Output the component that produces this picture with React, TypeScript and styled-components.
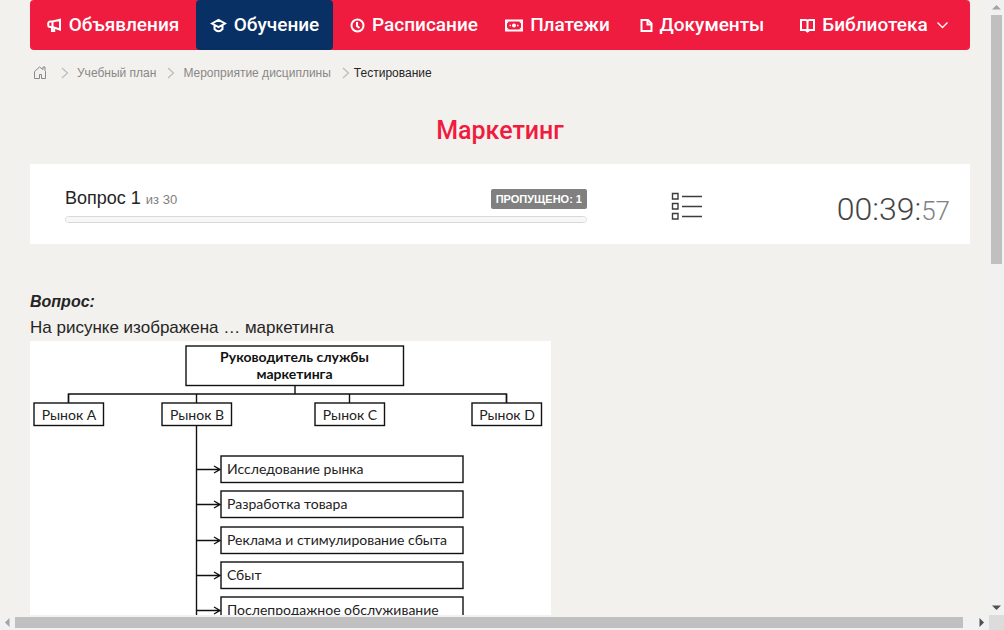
import React from "react";
import styled, { createGlobalStyle } from "styled-components";

const sans = `"Liberation Sans", Arial, sans-serif`;
const display = `Roboto, "Noto Sans", sans-serif`;

const GlobalStyle = createGlobalStyle`
  * { box-sizing: border-box; }
  body { margin: 0; background: #f3f1ed; color: #252525; font-family: ${sans}; }
`;

const Shell = styled.div`
  display: grid;
  grid-template: minmax(0, 1fr) 15px / minmax(0, 1fr) 15px;
  height: 100vh;
`;

const Viewport = styled.div`
  overflow: auto;
  scrollbar-width: none;
`;

const Page = styled.div`
  padding: 0 19px 40px 30px;
`;

const Nav = styled.nav`
  display: grid;
  grid-template-columns: 166fr 137fr 162fr 125fr 164fr 180fr;
  height: 50px;
  padding-right: 6px;
  border-radius: 4px;
  background: #ef1c3f;
`;

const NavLink = styled.a<{ $active?: boolean }>`
  display: flex;
  align-items: center;
  justify-content: center;
  gap: 7px;
  border-radius: 4px;
  background: ${(p) => (p.$active ? "#083064" : "transparent")};
  color: #fff;
  font: 500 19px/24px ${display};
  text-decoration: none;
  white-space: nowrap;
`;

const Icon = styled.svg`
  flex: none;
  fill: none;
  stroke: currentColor;
  stroke-width: 2;
`;

const Chevron = styled(Icon)`
  margin-left: 2px;
  stroke-width: 1.3;
`;

const HomeIcon = styled(Icon)`
  margin-right: 3px;
  stroke-width: 1;
`;

const Crumbs = styled.ol`
  display: flex;
  align-items: center;
  height: 46px;
  margin: 0;
  padding: 0 0 0 3px;
  list-style: none;
  font-size: 12px;
  line-height: 16px;
`;

const Crumb = styled.li`
  display: flex;
  align-items: center;
  color: #252525;

  a {
    display: flex;
    color: #888;
    text-decoration: none;
  }
`;

const Separator = styled(Icon)`
  margin: 0 8px 0 11px;
  color: #bcbcbc;
  stroke-width: 1.2;

  [aria-current] > & { margin-right: 4px; }
`;

const Title = styled.h1`
  margin: 18px 0 16px;
  color: #ef1c3f;
  font: 500 25px/34px ${display};
  text-align: center;
`;

const Card = styled.section`
  display: grid;
  grid-template-columns: 522fr 200fr 163fr;
  align-items: center;
  height: 80px;
  padding: 2px 20px 0 35px;
  background: #fff;
`;

const ProgressHead = styled.div`
  display: flex;
  align-items: center;
  justify-content: space-between;
  height: 22px;
  margin-bottom: 6px;
`;

const Counter = styled.label`
  font-size: 18px;
  line-height: 22px;

  small {
    color: #808080;
    font-size: 13px;
  }
`;

const Badge = styled.span`
  padding: 0 5px;
  border-radius: 2px;
  background: #808080;
  color: #fff;
  font-size: 11px;
  font-weight: bold;
  line-height: 20px;
`;

const Progress = styled.progress`
  display: block;
  appearance: none;
  width: 100%;
  height: 7px;
  border: 1px solid #d8d8d8;
  border-radius: 4px;
  background: #f7f7f7;
  overflow: hidden;

  &::-webkit-progress-bar { background: #f7f7f7; }
  &::-webkit-progress-value { background: #ef1c3f; }
`;

const ListButton = styled.button`
  justify-self: center;
  display: flex;
  padding: 4px 0 0;
  border: 0;
  background: none;
  color: #3c3c3c;
`;

const Timer = styled.time`
  justify-self: end;
  padding-top: 10px;
  color: #444;
  font: 300 32px/38px ${display};
  white-space: nowrap;

  small {
    color: #808080;
    font-size: 26px;
  }
`;

const Question = styled.section`
  margin-top: 45px;
`;

const QuestionLabel = styled.h2`
  margin: 0;
  font-size: 16px;
  font-style: italic;
  line-height: 26px;
`;

const QuestionText = styled.p`
  margin: 0;
  font-size: 17px;
  line-height: 26px;
`;

const Figure = styled.svg`
  display: block;
  background: #fff;
  fill: none;
  stroke: #111;
  stroke-width: 1.4;

  text {
    fill: #222;
    stroke: none;
    font: 14px Lato, "Open Sans", sans-serif;
  }

  .heading {
    fill: #111;
    font-weight: 700;
    text-anchor: middle;
  }

  .market {
    text-anchor: middle;
  }
`;

const Bar = styled.div<{ $vertical?: boolean }>`
  display: flex;
  flex-direction: ${(p) => (p.$vertical ? "column" : "row")};
  background: #f1f1f1;
`;

const Arrow = styled.button`
  display: flex;
  flex: none;
  align-items: center;
  justify-content: center;
  width: 15px;
  height: 15px;
  padding: 0;
  border: 0;
  background: none;
  color: #505050;

  &:disabled { color: #a3a3a3; }
`;

const Track = styled.div<{ $vertical?: boolean }>`
  display: flex;
  flex: 1;
  flex-direction: ${(p) => (p.$vertical ? "column" : "row")};
  padding: ${(p) => (p.$vertical ? "0 2px" : "2px 0")};
`;

const Thumb = styled.div<{ $share: number }>`
  flex: 0 0 ${(p) => p.$share}%;
  background: #c0c0c0;
`;

const Corner = styled.div`
  background: #dcdcdc;
`;

const items = [
  {
    label: "Объявления",
    width: 15,
    art: (
      <>
        <path d="M5.500 3.500 13 1.800v9.700L5.500 9H3.200A2 2 0 0 1 1.200 7V5.500a2 2 0 0 1 2-2zV9" />
        <path d="M5 9v4h2.200V9.500" />
      </>
    ),
  },
  {
    label: "Обучение",
    width: 17,
    active: true,
    art: <path d="M2 5.500 8.500 1.800 15 5.500 8.500 9.200zM4.500 7.500V11q4 4.500 8 0V7.500" />,
  },
  {
    label: "Расписание",
    width: 15,
    art: (
      <>
        <circle cx="7.5" cy="7.5" r="6" />
        <path d="M7 4v4l2.5 2" />
      </>
    ),
  },
  {
    label: "Платежи",
    width: 18,
    art: (
      <>
        <path d="M1 2.500h16v10H1z" />
        <path d="M2 3.500h2L2 5.500zM16 3.500h-2l2 2zM2 11.500h2l-2-2zM16 11.500h-2l2-2z" fill="#fff" stroke="none" />
        <circle cx="9" cy="7.500" r="2" fill="#fff" stroke="none" />
        <path d="M4.500 7.500H6M12 7.500h1.500" strokeWidth="1.500" />
      </>
    ),
  },
  {
    label: "Документы",
    width: 13,
    art: <path d="M1.500 2H8l3.500 3.500V13h-10zM7.500 2v4.500h4" />,
  },
  {
    label: "Библиотека",
    width: 15,
    menu: true,
    art: <path d="M1 2h4.500q2 0 2 1.500Q7.500 2 9.500 2H14v10H9.500l-2 1.500-2-1.500H1zM7.500 3v11" />,
  },
];

const markets = [
  { x: 4, stem: 38, name: "Рынок A" },
  { x: 132, stem: 166, name: "Рынок B" },
  { x: 285, stem: 319, name: "Рынок C" },
  { x: 442, stem: 476, name: "Рынок D" },
];

const tasks = [
  "Исследование рынка",
  "Разработка товара",
  "Реклама и стимулирование сбыта",
  "Сбыт",
  "Послепродажное обслуживание",
];

const CrumbSeparator = () => (
  <Separator width="8" height="12" viewBox="0 0 8 12" aria-hidden="true">
    <path d="m1 1 5.500 5L1 11" />
  </Separator>
);

const MarketingChart = () => (
  <Figure width="521" height="310" viewBox="0 0 521 310" role="img" aria-label="Структура службы маркетинга">
    <rect x="156" y="5" width="217.500" height="39.500" />
    <text className="heading" x="264.500" y="21">Руководитель службы</text>
    <text className="heading" x="264.500" y="38">маркетинга</text>
    <path d="M265 44.500V53M38.500 61.500V53h438v8.500" />
    {markets.map((m) => (
      <g key={m.name}>
        <path d={`M${m.stem}.500 53v9`} />
        <rect x={m.x} y="62" width="69.500" height="22.500" />
        <text className="market" x={m.x + 35} y="79">{m.name}</text>
      </g>
    ))}
    <path d="M166.500 84.500V275" />
    {tasks.map((name, i) => {
      const y = 115 + Math.round(i * 35.300);
      return (
        <g key={name}>
          <rect x="191" y={y} width="242" height="26.500" />
          <path d={`M166.500 ${y + 13.500}H190m-6-3.500 6 3.500-6 3.500`} />
          <text x="197" y={y + 18}>{name}</text>
        </g>
      );
    })}
  </Figure>
);

const Triangle = ({ points }: { points: string }) => (
  <svg width="9" height="9" viewBox="0 0 9 9" aria-hidden="true">
    <polygon points={points} fill="currentColor" />
  </svg>
);

export default function App() {
  return (
    <>
      <GlobalStyle />
      <Shell>
        <Viewport>
          <Page>
            <Nav>
              {items.map((item) => (
                <NavLink key={item.label} href="#" $active={item.active}>
                  <Icon width={item.width} height="15" viewBox={`0 0 ${item.width} 15`} aria-hidden="true">
                    {item.art}
                  </Icon>
                  {item.label}
                  {item.menu && (
                    <Chevron width="11" height="8" viewBox="0 0 11 8" aria-hidden="true">
                      <path d="m.5 1.500 5 5 5-5" />
                    </Chevron>
                  )}
                </NavLink>
              ))}
            </Nav>

            <Crumbs>
              <Crumb>
                <a href="#" aria-label="Главная">
                  <HomeIcon width="14" height="14" viewBox="0 0 14 14" aria-hidden="true">
                    <path d="M1.500 12.500v-7l5-4.500L10 3.500V1h2v4l.5.500v7h-4v-4h-2v4z" />
                  </HomeIcon>
                </a>
              </Crumb>
              <Crumb><CrumbSeparator /><a href="#">Учебный план</a></Crumb>
              <Crumb><CrumbSeparator /><a href="#">Мероприятие дисциплины</a></Crumb>
              <Crumb aria-current="page"><CrumbSeparator />Тестирование</Crumb>
            </Crumbs>

            <Title>Маркетинг</Title>

            <Card>
              <div>
                <ProgressHead>
                  <Counter htmlFor="progress">Вопрос 1 <small>из 30</small></Counter>
                  <Badge>ПРОПУЩЕНО: 1</Badge>
                </ProgressHead>
                <Progress id="progress" max={30} value={0} />
              </div>
              <ListButton type="button" aria-label="Список вопросов">
                <Icon width="32" height="30" viewBox="0 0 32 30" aria-hidden="true">
                  <path d="M1.500 1.500h5.500v5.500H1.500zM1.500 11.500h5.500v5.500H1.500zM1.500 21.500h5.500v5.500H1.500zM11 4.500h20M11 14.500h20M11 24.500h20" strokeWidth="1.400" />
                </Icon>
              </ListButton>
              <Timer>00:39:<small>57</small></Timer>
            </Card>

            <Question>
              <QuestionLabel>Вопрос:</QuestionLabel>
              <QuestionText>На рисунке изображена … маркетинга</QuestionText>
              <MarketingChart />
            </Question>
          </Page>
        </Viewport>

        <Bar $vertical>
          <Arrow type="button" disabled aria-label="Вверх"><Triangle points="0,6.500 4.500,2 9,6.500" /></Arrow>
          <Track $vertical><Thumb $share={42.6} /></Track>
          <Arrow type="button" aria-label="Вниз"><Triangle points="0,2.500 9,2.500 4.500,7" /></Arrow>
        </Bar>
        <Bar>
          <Arrow type="button" disabled aria-label="Влево"><Triangle points="6.500,0 6.500,9 2,4.500" /></Arrow>
          <Track><Thumb $share={98.9} /></Track>
          <Arrow type="button" aria-label="Вправо"><Triangle points="2.500,0 2.500,9 7,4.500" /></Arrow>
        </Bar>
        <Corner />
      </Shell>
    </>
  );
}
